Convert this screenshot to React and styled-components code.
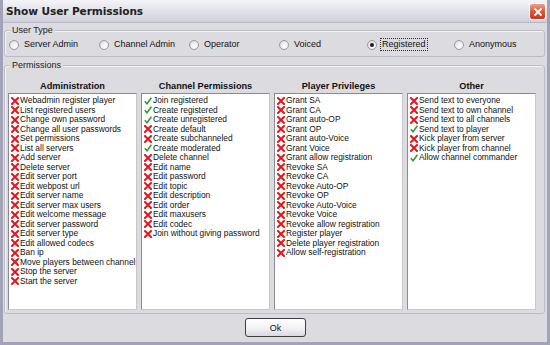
import React from 'react';
import styled, { createGlobalStyle } from 'styled-components';

const GlobalStyle = createGlobalStyle`
  body {
    margin: 0;
    background: #dcdbe0;
    font-family: Tahoma, 'DejaVu Sans', sans-serif;
  }
`;

const userTypes = [
  { label: 'Server Admin' },
  { label: 'Channel Admin' },
  { label: 'Operator' },
  { label: 'Voiced' },
  { label: 'Registered', checked: true },
  { label: 'Anonymous' },
];

const columns = [
  {
    title: 'Administration',
    items: [
      ['Webadmin register player', 0],
      ['List registered users', 0],
      ['Change own password', 0],
      ['Change all user passwords', 0],
      ['Set permissions', 0],
      ['List all servers', 0],
      ['Add server', 0],
      ['Delete server', 0],
      ['Edit server port', 0],
      ['Edit webpost url', 0],
      ['Edit server name', 0],
      ['Edit server max users', 0],
      ['Edit welcome message', 0],
      ['Edit server password', 0],
      ['Edit server type', 0],
      ['Edit allowed codecs', 0],
      ['Ban ip', 0],
      ['Move players between channels', 0],
      ['Stop the server', 0],
      ['Start the server', 0],
    ],
  },
  {
    title: 'Channel Permissions',
    items: [
      ['Join registered', 1],
      ['Create registered', 1],
      ['Create unregistered', 1],
      ['Create default', 0],
      ['Create subchanneled', 0],
      ['Create moderated', 1],
      ['Delete channel', 0],
      ['Edit name', 0],
      ['Edit password', 0],
      ['Edit topic', 0],
      ['Edit description', 0],
      ['Edit order', 0],
      ['Edit maxusers', 0],
      ['Edit codec', 0],
      ['Join without giving password', 0],
    ],
  },
  {
    title: 'Player Privileges',
    items: [
      ['Grant SA', 0],
      ['Grant CA', 0],
      ['Grant auto-OP', 0],
      ['Grant OP', 0],
      ['Grant auto-Voice', 0],
      ['Grant Voice', 0],
      ['Grant allow registration', 0],
      ['Revoke SA', 0],
      ['Revoke CA', 0],
      ['Revoke Auto-OP', 0],
      ['Revoke OP', 0],
      ['Revoke Auto-Voice', 0],
      ['Revoke Voice', 0],
      ['Revoke allow registration', 0],
      ['Register player', 0],
      ['Delete player registration', 0],
      ['Allow self-registration', 0],
    ],
  },
  {
    title: 'Other',
    items: [
      ['Send text to everyone', 0],
      ['Send text to own channel', 0],
      ['Send text to all channels', 0],
      ['Send text to player', 1],
      ['Kick player from server', 0],
      ['Kick player from channel', 0],
      ['Allow channel commander', 1],
    ],
  },
];

const CrossIcon = () => (
  <svg width="8" height="8" viewBox="0 0 8 8">
    <path d="M1 1 L7 7 M7 1 L1 7" stroke="#e8141c" strokeWidth="2" strokeLinecap="square" />
  </svg>
);

const CheckIcon = () => (
  <svg width="8" height="8" viewBox="0 0 8 8">
    <path d="M0.8 4.2 L3 6.8 L7.4 0.8" stroke="#2e9a2e" strokeWidth="1.5" fill="none" />
  </svg>
);

const App = () => {
  return (
    <>
      <GlobalStyle />
      <Window>
        <TitleBar>
          <Title>Show User Permissions</Title>
          <CloseButton>
            <svg width="10" height="10" viewBox="0 0 10 10">
              <path d="M1.5 1.5 L8.5 8.5 M8.5 1.5 L1.5 8.5" stroke="#fff" strokeWidth="1.8" />
            </svg>
          </CloseButton>
        </TitleBar>
        <Body>
          <GroupBox>
            <Legend>User Type</Legend>
            <RadioRow>
              {userTypes.map((t) => (
                <RadioItem key={t.label}>
                  <RadioCircle>{t.checked && <RadioDot />}</RadioCircle>
                  <RadioLabel $focused={t.checked}>{t.label}</RadioLabel>
                </RadioItem>
              ))}
            </RadioRow>
          </GroupBox>
          <PermGroup>
            <Legend>Permissions</Legend>
            <Columns>
              {columns.map((col) => (
                <Column key={col.title}>
                  <Heading>{col.title}</Heading>
                  <ListBox>
                    {col.items.map(([text, ok]) => (
                      <Item key={text}>
                        <IconBox>{ok ? <CheckIcon /> : <CrossIcon />}</IconBox>
                        <ItemText>{text}</ItemText>
                      </Item>
                    ))}
                  </ListBox>
                </Column>
              ))}
            </Columns>
          </PermGroup>
          <Footer>
            <OkButton>Ok</OkButton>
          </Footer>
        </Body>
      </Window>
    </>
  );
};

const Window = styled.div`
  width: 550px;
  height: 345px;
  box-sizing: border-box;
  display: flex;
  flex-direction: column;
  background: #dcdbe0;
  border-left: 3px solid #a3a3b8;
  border-right: 3px solid #a3a3b8;
  border-bottom: 3px solid #a3a3b8;
  overflow: hidden;
`;

const TitleBar = styled.div`
  height: 22px;
  margin: 0 -3px;
  padding: 0 4px 0 6px;
  display: flex;
  align-items: center;
  justify-content: space-between;
  background: linear-gradient(to bottom, #f4f4f8 0%, #e6e6ee 40%, #cfcfdc 100%);
  border-bottom: 1px solid #b8b8c8;
`;

const Title = styled.span`
  font-family: 'DejaVu Sans', sans-serif;
  font-weight: bold;
  font-size: 10.6px;
  color: #222;
  letter-spacing: -0.1px;
`;

const CloseButton = styled.div`
  width: 17px;
  height: 17px;
  box-sizing: border-box;
  border: 1px solid #fff;
  border-radius: 3px;
  background: linear-gradient(to bottom, #f19f8c 0%, #e0563a 50%, #c8361e 100%);
  display: flex;
  align-items: center;
  justify-content: center;
  margin-top: 1px;
`;

const Body = styled.div`
  flex: 1;
  display: flex;
  flex-direction: column;
  padding: 2px 2px 0 1px;
`;

const GroupBox = styled.div`
  position: relative;
  border: 1px solid #bcbcc4;
  border-radius: 3px;
  height: 25px;
  margin-top: 5px;
  box-shadow: inset 1px 1px 0 #f4f4f6;
`;

const Legend = styled.span`
  position: absolute;
  top: -6px;
  left: 5px;
  padding: 0 2px;
  background: #dcdbe0;
  font-family: 'Liberation Sans', sans-serif;
  font-size: 9px;
  line-height: 10px;
  color: #222;
`;

const RadioRow = styled.div`
  display: grid;
  grid-template-columns: 90px 90px 90px 88px 87px 1fr;
  padding: 8px 0 0 4px;
`;

const RadioItem = styled.div`
  display: flex;
  align-items: center;
  gap: 4px;
`;

const RadioCircle = styled.div`
  width: 10px;
  height: 10px;
  box-sizing: border-box;
  border-radius: 50%;
  border: 1px solid #9a9aa0;
  background: radial-gradient(circle at 65% 65%, #ffffff 0%, #f2f2f2 40%, #cfcfd4 100%);
  display: flex;
  align-items: center;
  justify-content: center;
`;

const RadioDot = styled.div`
  width: 4px;
  height: 4px;
  border-radius: 50%;
  background: #1a1a1a;
`;

const RadioLabel = styled.span`
  font-family: 'Liberation Sans', sans-serif;
  font-size: 9px;
  line-height: 11px;
  color: #111;
  padding: 0 1px;
  outline: ${(p) => (p.$focused ? '1px dotted #333' : 'none')};
`;

const PermGroup = styled(GroupBox)`
  height: auto;
  flex: 1;
  margin-top: 8px;
  padding: 15px 0 3px 3px;
`;

const Columns = styled.div`
  display: grid;
  grid-template-columns: repeat(4, 129px);
  column-gap: 4px;
  height: 100%;
`;

const Column = styled.div`
  display: flex;
  flex-direction: column;
`;

const Heading = styled.div`
  text-align: center;
  font-family: 'Liberation Sans', sans-serif;
  font-weight: bold;
  font-size: 9.2px;
  line-height: 11px;
  color: #111;
  margin-bottom: 1px;
`;

const ListBox = styled.div`
  flex: 1;
  background: #fff;
  border: 1px solid #8a8a94;
  border-right-color: #c8c8cc;
  border-bottom-color: #c8c8cc;
  padding: 2px 0 0 2px;
  overflow: hidden;
`;

const Item = styled.div`
  display: flex;
  align-items: center;
  height: 9.5px;
  white-space: nowrap;
`;

const IconBox = styled.span`
  width: 9px;
  display: flex;
  align-items: center;
  flex-shrink: 0;
`;

const ItemText = styled.span`
  font-family: 'Liberation Sans', sans-serif;
  font-size: 8.4px;
  line-height: 9.5px;
  color: #111;
`;

const Footer = styled.div`
  display: flex;
  justify-content: center;
  padding: 4px 0 5px;
`;

const OkButton = styled.button`
  width: 61px;
  height: 19px;
  margin-left: 2px;
  border: 1px solid #3c3c44;
  border-radius: 3px;
  background: linear-gradient(to bottom, #ffffff 0%, #f0f0f2 60%, #d8d8de 100%);
  font-family: 'Liberation Sans', sans-serif;
  font-size: 9px;
  color: #111;
  padding: 0;
`;

export default App;
